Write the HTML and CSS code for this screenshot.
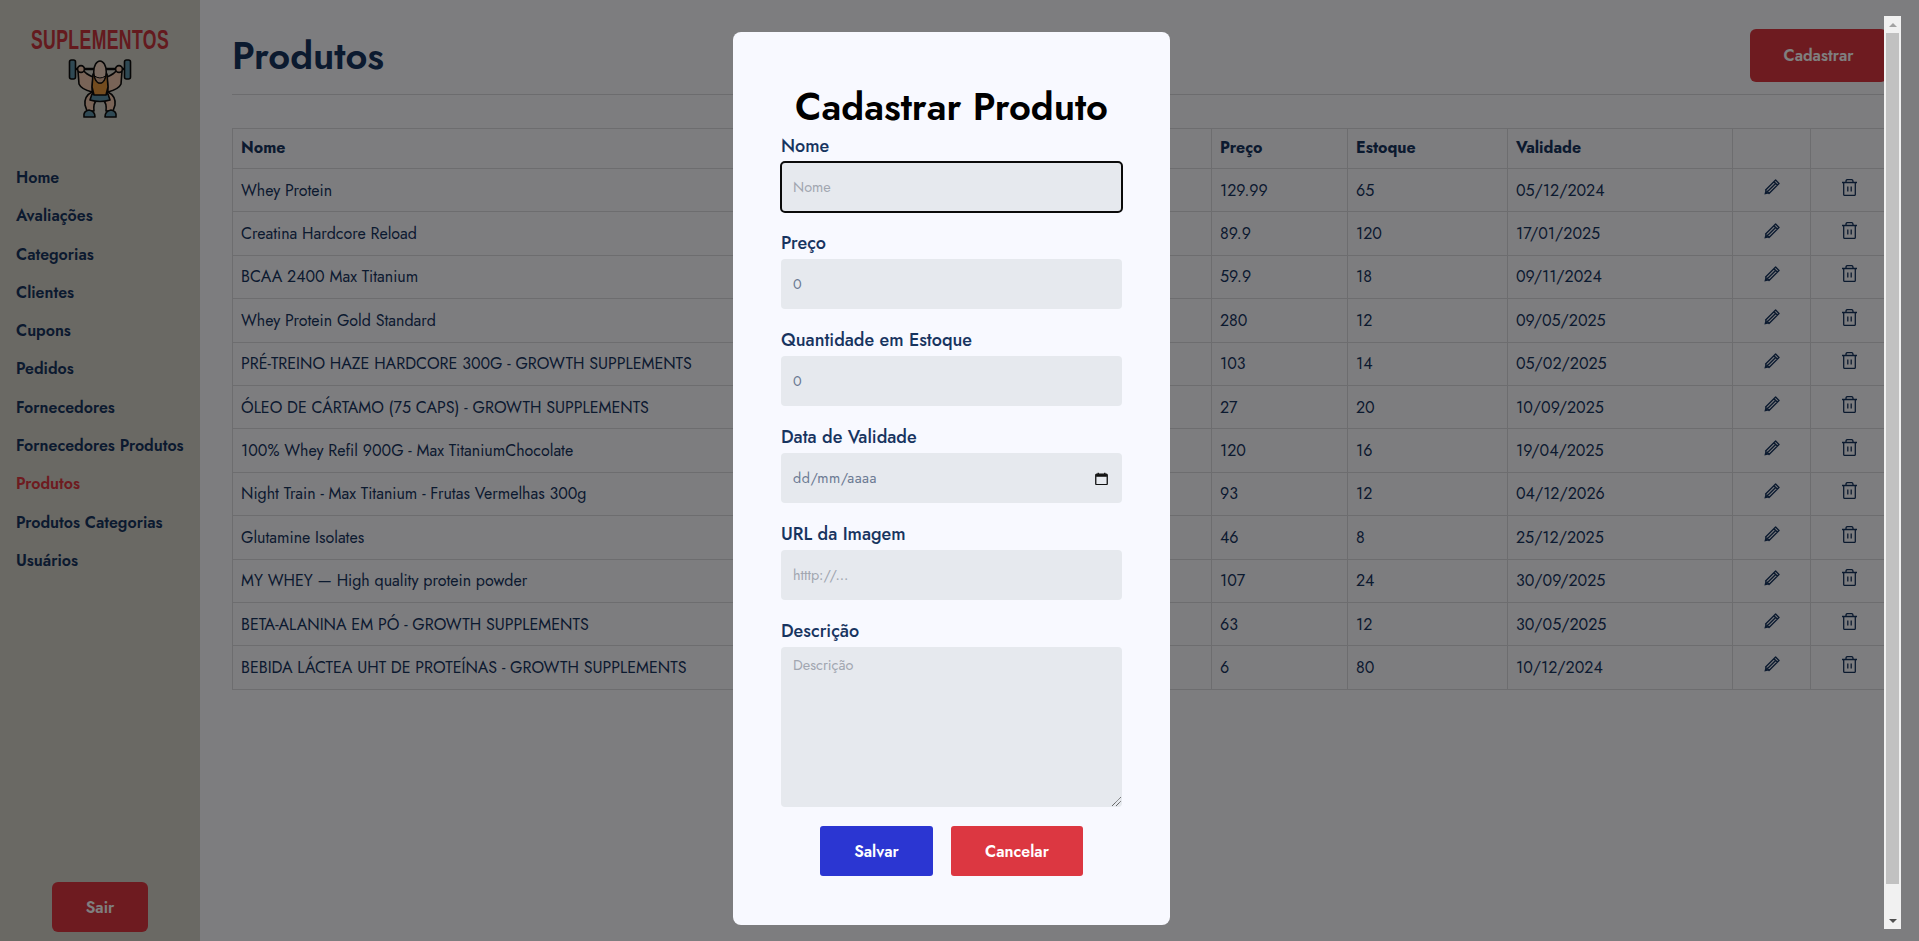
FILE: index.html
```html
<!DOCTYPE html>
<html lang="pt-BR">
<head>
<meta charset="utf-8">
<title>Produtos</title>
<link rel="stylesheet" href="styles.css">
</head>
<body>
<div class="app">
  <aside class="sidebar">
    <div class="logo">
      <div class="logo-text">SUPLEMENTOS</div>
      <svg class="logo-icon" viewBox="0 0 64 60" width="64" height="60">
        <g stroke="#0c0c0c" stroke-width="1.6" stroke-linejoin="round" stroke-linecap="round">
          <path d="M7 10H56" fill="none" stroke-width="2.4"/>
          <rect x="1.5" y="1" width="6" height="19" rx="2" fill="#5f93a8"/>
          <rect x="56.5" y="1" width="6" height="19" rx="2" fill="#5f93a8"/>
          <path d="M10 12L11 25Q13 30 24 33L25 18Q18 15 16 12z" fill="#f2c9ae"/>
          <path d="M54 12L53 25Q51 30 40 33L39 18Q46 15 48 12z" fill="#f2c9ae"/>
          <circle cx="13" cy="10" r="3.4" fill="#f2c9ae"/>
          <circle cx="51" cy="10" r="3.4" fill="#f2c9ae"/>
          <path d="M24 33Q16 37 17 46L19 52H26Q25 44 29 41z" fill="#f2c9ae"/>
          <path d="M40 33Q48 37 47 46L45 52H38Q39 44 35 41z" fill="#f2c9ae"/>
          <path d="M24 35H40L42 41Q32 44 22 41z" fill="#5f93a8"/>
          <path d="M25 15L39 15L40 28L38 36H26L24 28z" fill="#e8983e"/>
          <ellipse cx="32" cy="13" rx="6.300" ry="11" fill="#f5d6c2"/>
          <path d="M26.500 17Q32 21 37.500 17Q36 24 32 24Q28 24 26.500 17z" fill="#e3b89c" stroke-width="1"/>
          <path d="M16 58Q15 52 21 51Q27 52 27 58z" fill="#5f93a8"/>
          <path d="M37 58Q37 52 43 51Q49 52 48 58z" fill="#5f93a8"/>
        </g>
      </svg>
    </div>
    <nav class="nav">
      <a class="nav-link">Home</a>
      <a class="nav-link">Avaliações</a>
      <a class="nav-link">Categorias</a>
      <a class="nav-link">Clientes</a>
      <a class="nav-link">Cupons</a>
      <a class="nav-link">Pedidos</a>
      <a class="nav-link">Fornecedores</a>
      <a class="nav-link">Fornecedores Produtos</a>
      <a class="nav-link nav-active">Produtos</a>
      <a class="nav-link">Produtos Categorias</a>
      <a class="nav-link">Usuários</a>
    </nav>
    <button class="btn btn-red btn-logout">Sair</button>
  </aside>
  <main class="main">
    <header class="page-head">
      <h1 class="page-title">Produtos</h1>
      <button class="btn btn-red btn-new">Cadastrar</button>
    </header>
    <table class="table">
      <colgroup>
        <col class="c-name"><col class="c-price"><col class="c-stock"><col class="c-date"><col class="c-act1"><col class="c-act2">
      </colgroup>
      <thead>
        <tr><th>Nome</th><th>Preço</th><th>Estoque</th><th>Validade</th><th></th><th></th></tr>
      </thead>
      <tbody id="rows"></tbody>
    </table>
  </main>
</div>

<div class="overlay">
  <form class="modal">
    <h2 class="modal-title">Cadastrar Produto</h2>
    <div class="field field-first"><label class="label">Nome</label><div class="input input-focus ph">Nome</div></div>
    <div class="field"><label class="label">Preço</label><div class="input val">0</div></div>
    <div class="field"><label class="label">Quantidade em Estoque</label><div class="input val">0</div></div>
    <div class="field"><label class="label">Data de Validade</label>
      <div class="input val input-date"><span class="date-text">dd/mm/aaaa</span>
        <svg class="cal" viewBox="0 0 12 12" width="13" height="13"><path d="M1.5 2h9a.8.8 0 0 1 .8.8v8a.8.8 0 0 1-.8.8h-9a.8.8 0 0 1-.8-.8v-8A.8.8 0 0 1 1.5 2zM3 .6v1.400M9 .6v1.400" fill="none" stroke="#111" stroke-width="1.2"/><rect x="1" y="2" width="10" height="2.400" fill="#111"/></svg>
      </div>
    </div>
    <div class="field"><label class="label">URL da Imagem</label><div class="input ph">htttp://...</div></div>
    <div class="field"><label class="label">Descrição</label>
      <div class="input textarea ph">Descrição
        <svg class="grip" viewBox="0 0 9 9" width="9" height="9"><path d="M0 9L9 0M4 9L9 4" stroke="#333" stroke-width="1" stroke-dasharray="1 .6" fill="none"/></svg>
      </div>
    </div>
    <div class="modal-actions">
      <button type="button" class="btn-modal btn-save">Salvar</button>
      <button type="button" class="btn-modal btn-cancel">Cancelar</button>
    </div>
  </form>
  <div class="scrollbar">
    <div class="sb-arrow"><span class="tri tri-up"></span></div>
    <div class="sb-track"><div class="sb-thumb"></div></div>
    <div class="sb-arrow"><span class="tri tri-down"></span></div>
  </div>
</div>
<script src="app.js"></script>
</body>
</html>
```
FILE: app.js
```js
var data = [
  ["Whey Protein","129.99","65","05/12/2024"],
  ["Creatina Hardcore Reload","89.9","120","17/01/2025"],
  ["BCAA 2400 Max Titanium","59.9","18","09/11/2024"],
  ["Whey Protein Gold Standard","280","12","09/05/2025"],
  ["PRÉ-TREINO HAZE HARDCORE 300G - GROWTH SUPPLEMENTS","103","14","05/02/2025"],
  ["ÓLEO DE CÁRTAMO (75 CAPS) - GROWTH SUPPLEMENTS","27","20","10/09/2025"],
  ["100% Whey Refil 900G - Max TitaniumChocolate","120","16","19/04/2025"],
  ["Night Train - Max Titanium - Frutas Vermelhas 300g","93","12","04/12/2026"],
  ["Glutamine Isolates","46","8","25/12/2025"],
  ["MY WHEY — High quality protein powder","107","24","30/09/2025"],
  ["BETA-ALANINA EM PÓ - GROWTH SUPPLEMENTS","63","12","30/05/2025"],
  ["BEBIDA LÁCTEA UHT DE PROTEÍNAS - GROWTH SUPPLEMENTS","6","80","10/12/2024"]
];
var pencil = '<svg class="ico ico-pencil" viewBox="0 0 16 16" width="16" height="16"><path d="M11.6 1L15 4.400L5 14.400L1.600 11zM9.900 2.700L13.300 6.100M11.600 4.400L3.300 12.700" fill="none" stroke="currentColor" stroke-width="1.400" stroke-linejoin="round"/><path d="M.4 15.600L1.400 11.400L4.600 14.600z" fill="currentColor"/></svg>';
var trash = '<svg class="ico ico-trash" viewBox="0 0 15 17" width="15" height="17"><path d="M0 3.500H15M4 3.500V2.200Q4 .6 5.600 .6H9.400Q11 .6 11 2.200V3.500M1.700 3.500V15.500Q1.700 16.400 2.600 16.400H12.400Q13.300 16.400 13.300 15.500V3.500M5.800 7.500V12.500M9.200 7.500V12.500" fill="none" stroke="currentColor" stroke-width="1.300"/></svg>';
document.getElementById("rows").innerHTML = data.map(function (r) {
  return "<tr><td>" + r[0] + "</td><td>" + r[1] + "</td><td>" + r[2] + "</td><td>" + r[3] +
    '</td><td class="act">' + pencil + '</td><td class="act">' + trash + "</td></tr>";
}).join("");
```
FILE: styles.css
```css
* { box-sizing: border-box; }
html, body { margin: 0; height: 100%; overflow: hidden; }
body { font-family: "Jost", "Lato", "Noto Sans", sans-serif; color: #17345f; background: #fbfbff; }

.app { display: flex; height: 941px; width: 1919px; }

.sidebar { width: 200px; flex: none; background: #d4d2c8; display: flex; flex-direction: column; align-items: stretch; }
.logo { display: flex; flex-direction: column; align-items: center; padding-top: 25px; height: 148px; }
.logo-text { font-family: "Liberation Sans", sans-serif; font-weight: 700; font-size: 28px; line-height: 30px; letter-spacing: .6px; color: #c8343c; white-space: nowrap; transform: scaleX(.63); height: 30px; width: 136px; display: flex; justify-content: center; }
.logo-icon { margin-top: 4px; }
.nav { display: flex; flex-direction: column; padding: 11px 16px 0; }
.nav-link { font-size: 16px; font-weight: 600; line-height: 38.3px; color: #17345f; white-space: nowrap; }
.nav-active { color: #dc3741; }
.btn { border: 0; border-radius: 6px; font-family: inherit; font-weight: 600; font-size: 16px; color: #fff; }
.btn-red { background: #dc3741; }
.btn-logout { width: 96px; height: 50px; margin: auto auto 9px; }

.main { flex: 1; min-width: 0; padding: 29px 32px 0; }
.page-head { display: flex; justify-content: space-between; align-items: flex-start; height: 66px; border-bottom: 1px solid #d8d8dc; }
.page-title { margin: 0; font-size: 38px; line-height: 54px; font-weight: 600; color: #17345f; }
.btn-new { width: 137px; height: 53px; }

.table { margin-top: 33px; width: 1655px; border-collapse: collapse; table-layout: fixed; font-size: 16px; }
.c-name { width: 979px; } .c-price { width: 136px; } .c-stock { width: 160px; } .c-date { width: 225px; } .c-act1 { width: 78px; } .c-act2 { width: 77px; }
.table th, .table td { border: 1px solid #dadade; padding: 0 8px; text-align: left; white-space: nowrap; }
.table th { height: 40px; padding-bottom: 2px; font-weight: 700; color: #17345f; }
.table td { height: 43.4px; color: #17345f; }
.table td.act { text-align: center; }
.ico { display: block; margin: -6px auto 0; color: #17345f; }

.overlay { position: fixed; inset: 0; background: rgba(0,0,0,.5); display: flex; justify-content: center; align-items: flex-start; padding: 32px 16px 0 0; }
.modal { width: 437px; height: 893px; background: #f8f9ff; border-radius: 8px; padding: 54px 48px 0; display: flex; flex-direction: column; }
.modal-title { margin: 0; height: 46px; font-size: 38px; line-height: 42px; font-weight: 600; color: #000; text-align: center; white-space: nowrap; }
.field { margin-top: 13px; display: flex; flex-direction: column; }
.field-first { margin-top: 0; }
.label { font-size: 18px; line-height: 37px; color: #17345f; height: 34px; font-weight: 500; }
.field-first .label { line-height: 29px; height: 30px; }
.input { height: 50px; background: #e6e9ee; border-radius: 4px; padding: 0 12px; display: flex; align-items: center; font-size: 14.4px; position: relative; }
.input-focus { outline: 2px solid #0b0b0b; outline-offset: -1px; }
.ph { color: #a1a6b0; }
.val { color: #6b7a93; }
.input-date { justify-content: space-between; }
.date-text { letter-spacing: .5px; }
.cal { margin-right: 2px; }
.textarea { height: 160px; align-items: flex-start; padding-top: 8px; }
.grip { position: absolute; right: 1px; bottom: 1px; }
.modal-actions { margin-top: 19px; display: flex; justify-content: center; gap: 18px; }
.btn-modal { height: 50px; border: 0; border-radius: 3px; color: #fff; font-family: inherit; font-size: 16px; font-weight: 600; }
.btn-save { width: 113px; background: #2b36d2; }
.btn-cancel { width: 132px; background: #dc3741; }

.scrollbar { position: absolute; left: 1884px; top: 16px; width: 17px; height: 913px; background: #f1f1f1; display: flex; flex-direction: column; }
.sb-arrow { height: 17px; display: flex; align-items: center; justify-content: center; flex: none; }
.sb-track { flex: 1; padding: 0 2px; }
.sb-thumb { height: 851px; background: #c1c1c1; }
.tri { width: 0; height: 0; border-left: 4px solid transparent; border-right: 4px solid transparent; }
.tri-up { border-bottom: 4px solid #a3a3a3; }
.tri-down { border-top: 4px solid #505050; }
```
